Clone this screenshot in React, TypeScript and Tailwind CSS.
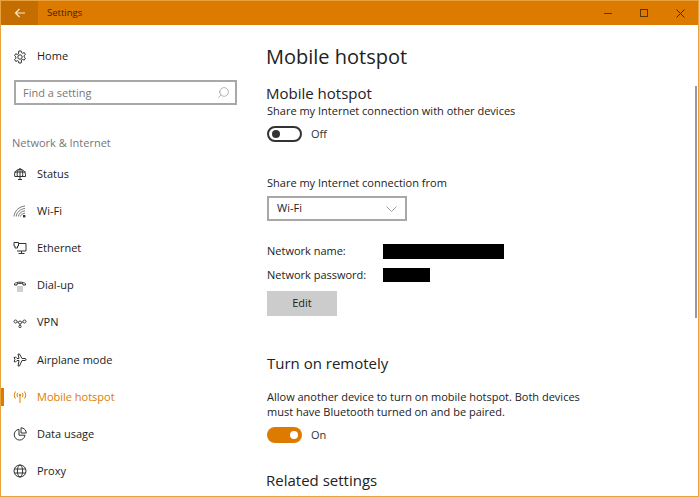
import { Search } from 'lucide-react'
import type { ReactNode } from 'react'

const orange = '#dd7b00'

function GearIcon() {
  return (
    <svg width="14" height="14" viewBox="0 0 14 14" fill="none" stroke="#333" strokeWidth="1">
      <circle cx="7" cy="7" r="2.2" />
      <path d="M5.800 1h2.400l.3 1.700 1.200.6 1.500-.8 1.200 2-1.300 1.100v1.400l1.300 1.200-1.200 2-1.500-.8-1.200.6L8.200 13H5.800l-.3-1.700-1.200-.6-1.500.8-1.200-2 1.300-1.200V6.900L1.600 5.700l1.200-2 1.500.8 1.200-.6z" />
    </svg>
  )
}

function StatusIcon() {
  return (
    <svg width="14" height="14" viewBox="0 0 14 14" fill="none" stroke="#333" strokeWidth="1">
      <path d="M1.800 9.500A5.500 5.500 0 1 1 12.500 7.500v2z" />
      <path d="M1.500 5h11M7 1.500v8M4.500 9.500c-.8-3-.3-6 2-8M9.500 9.500c.6-3 .2-6-2-8M5 12.500h4M7 9.500v3" />
    </svg>
  )
}

function WifiIcon() {
  return (
    <svg width="14" height="14" viewBox="0 0 14 14" fill="none" stroke="#555" strokeWidth="0.8">
      <path d="M1 12.500C1.500 7 6 2.500 12 2M3.200 12.500c.4-4 3.800-7.500 8.800-8M5.400 12.500c.3-2.700 2.800-5.300 6.600-5.700M7.600 12.500c.2-1.500 1.600-3 4.400-3.300" />
      <rect x="10" y="11" width="2.400" height="2.400" fill="#333" stroke="none" />
    </svg>
  )
}

function EthernetIcon() {
  return (
    <svg width="14" height="14" viewBox="0 0 14 14" fill="none" stroke="#333" strokeWidth="1">
      <path d="M5 2.500h8v7.500H4M8.500 10v2.500M5.500 12.500h6" />
      <path d="M1 1.500h4.500v3.500h-1v2h-2.500v-2h-1z" fill="#fff" />
    </svg>
  )
}

function DialIcon() {
  return (
    <svg width="14" height="14" viewBox="0 0 14 14" fill="none" stroke="#333" strokeWidth="1">
      <path d="M1.500 6V4.800C3 2.600 11 2.600 12.500 4.800V6H10V4.800C8.500 4.200 5.500 4.200 4 4.800V6z" />
      <path d="M4.500 8h5M4.500 10h5M4.500 12h5" strokeDasharray="1 1" strokeWidth="0.9" />
    </svg>
  )
}

function VpnIcon() {
  return (
    <svg width="14" height="14" viewBox="0 0 14 14" fill="none" stroke="#333" strokeWidth="0.9">
      <circle cx="2.500" cy="5.500" r="1.500" />
      <circle cx="7" cy="6.500" r="1.500" />
      <circle cx="11.500" cy="5.500" r="1.500" />
      <circle cx="7" cy="10.500" r="1.200" />
      <path d="M4 5.900l1.500.4M10 5.900l-1.500.4M7 8v1.300" />
    </svg>
  )
}

function PlaneIcon() {
  return (
    <svg width="14" height="14" viewBox="0 0 14 14" fill="none" stroke="#333" strokeWidth="1">
      <path d="M1 4.500l1.500-.5L4 5.500h2L5 1h1.500L9 5.500h3c1.300 0 1.500 2 0 2H9L6.500 13H5l1-5.500H4L2.500 9 1 8.500l1-2z" strokeLinejoin="round" />
    </svg>
  )
}

function HotspotIcon() {
  return (
    <svg width="14" height="14" viewBox="0 0 14 14" fill="none" stroke={orange} strokeWidth="1">
      <path d="M7 5.500V13" />
      <circle cx="7" cy="5" r="0.700" fill={orange} />
      <path d="M4.800 2.800c-1 1.300-1 3.100 0 4.400M9.200 2.800c1 1.300 1 3.100 0 4.400M2.600 1.500c-1.700 2.200-1.700 5.300 0 7M11.400 1.500c1.700 2.200 1.700 5.300 0 7" />
    </svg>
  )
}

function DataIcon() {
  return (
    <svg width="14" height="14" viewBox="0 0 14 14" fill="none" stroke="#333" strokeWidth="1">
      <path d="M6 2.300A5.400 5.400 0 1 0 12 8.200H6z" />
      <path d="M8 .8A5.400 5.400 0 0 1 13.300 6H8z" />
    </svg>
  )
}

function GlobeIcon() {
  return (
    <svg width="14" height="14" viewBox="0 0 14 14" fill="none" stroke="#333" strokeWidth="1">
      <circle cx="7" cy="7" r="6" />
      <ellipse cx="7" cy="7" rx="2.600" ry="6" />
      <path d="M1.200 5h11.600M1.200 9h11.600" />
    </svg>
  )
}

const navItems: { label: string; icon: ReactNode; active?: boolean }[] = [
  { label: 'Status', icon: <StatusIcon /> },
  { label: 'Wi-Fi', icon: <WifiIcon /> },
  { label: 'Ethernet', icon: <EthernetIcon /> },
  { label: 'Dial-up', icon: <DialIcon /> },
  { label: 'VPN', icon: <VpnIcon /> },
  { label: 'Airplane mode', icon: <PlaneIcon /> },
  { label: 'Mobile hotspot', icon: <HotspotIcon />, active: true },
  { label: 'Data usage', icon: <DataIcon /> },
  { label: 'Proxy', icon: <GlobeIcon /> },
]

function Toggle({ on, label }: { on: boolean; label: string }) {
  return (
    <div className="flex items-center h-[16px] gap-[9px]">
      <div
        className={
          on
            ? 'w-[35px] h-[16px] rounded-full bg-[#dd7b00] flex items-center justify-end px-[4px]'
            : 'w-[35px] h-[16px] rounded-full border-2 border-[#333] flex items-center px-[3px]'
        }
      >
        <div className={on ? 'w-[8px] h-[8px] rounded-full bg-white' : 'w-[8px] h-[8px] rounded-full bg-[#333]'} />
      </div>
      <span className="text-[11px] text-[#333]">{label}</span>
    </div>
  )
}

export default function App() {
  return (
    <div
      className="relative w-[699px] h-[497px] overflow-hidden flex flex-col bg-white border border-[#e8a33d] text-[#222]"
      style={{ fontFamily: '"Open Sans", "Noto Sans", sans-serif' }}
    >
      {/* Title bar */}
      <div className="h-[24px] shrink-0 flex items-center bg-[#dd7b00]">
        <div className="w-[37px] h-full bg-[#c46d00] flex items-center justify-center">
          <svg width="12" height="10" viewBox="0 0 12 10" fill="none" stroke="#fbe6c8" strokeWidth="1.200">
            <path d="M11 5H1.500M5.500 1L1.500 5l4 4" />
          </svg>
        </div>
        <span className="ml-[9px] text-[9.5px] text-[#3a2500]">Settings</span>
        <div className="ml-auto flex items-center">
          <div className="w-[36px] flex justify-center">
            <div className="w-[8px] h-px bg-[#5a3500]" />
          </div>
          <div className="w-[36px] flex justify-center">
            <div className="w-[8px] h-[8px] border border-[#5a3500]" />
          </div>
          <div className="w-[36px] flex justify-center">
            <svg width="9" height="9" viewBox="0 0 9 9" stroke="#4a2c00" strokeWidth="1">
              <path d="M.5.500l8 8M8.500.500l-8 8" />
            </svg>
          </div>
        </div>
      </div>

      <div className="flex flex-1 min-h-0">
        {/* Sidebar */}
        <div className="w-[265px] shrink-0 flex flex-col">
          <div className="h-[37px] mt-[13px] flex items-center pl-[12px] gap-[10px]">
            <GearIcon />
            <span className="text-[11px]">Home</span>
          </div>
          <div className="ml-[13px] w-[223px] h-[25px] mt-[5px] border-2 border-[#a8a8a8] flex items-center justify-between pl-[7px] pr-[5px]">
            <span className="text-[11px] text-[#777] translate-y-px">Find a setting</span>
            <Search size={13} strokeWidth={1} color="#777" className="-scale-x-100" />
          </div>
          <div className="mt-[28px] h-[20px] pl-[11px] flex items-center text-[11px] text-[#767676]">Network &amp; Internet</div>
          <div className="mt-[2.6px] flex flex-col">
            {navItems.map((item) => (
              <div key={item.label} className="relative h-[37.15px] shrink-0 flex items-center pl-[12px] gap-[10px]">
                {item.active && <div className="absolute left-0 top-[10px] w-[3px] h-[18px] bg-[#dd7b00]" />}
                {item.icon}
                <span className={item.active ? 'text-[11px] text-[#dd7b00]' : 'text-[11px]'}>{item.label}</span>
              </div>
            ))}
          </div>
        </div>

        {/* Content */}
        <div className="flex-1 min-w-0 flex flex-col">
          <div className="mt-[16px] h-[32px] flex items-center text-[20px] text-[#222]">Mobile hotspot</div>
          <div className="mt-[9px] h-[22px] flex items-center text-[15px]">Mobile hotspot</div>
          <div className="-mt-[2px] h-[18px] flex items-center text-[11px] pl-px">Share my Internet connection with other devices</div>
          <div className="mt-[6px] pl-px"><Toggle on={false} label="Off" /></div>
          <div className="mt-[32px] h-[18px] flex items-center text-[11px] pl-px">Share my Internet connection from</div>
          <div className="mt-[4px] ml-px w-[140px] h-[25px] border-2 border-[#a8a8a8] flex items-center justify-between pl-[8px] pr-[8px]">
            <span className="text-[11px]">Wi-Fi</span>
            <svg width="11" height="6" viewBox="0 0 11 6" fill="none" stroke="#888" strokeWidth="0.800">
              <path d="M.5.500l5 5 5-5" />
            </svg>
          </div>
          <div className="mt-[21px] ml-px flex items-center h-[18px]">
            <span className="w-[116px] text-[11px]">Network name:</span>
            <div className="w-[121px] h-[15px] bg-black" />
          </div>
          <div className="mt-[6px] ml-px flex items-center h-[18px]">
            <span className="w-[116px] text-[11px]">Network password:</span>
            <div className="w-[47px] h-[14px] bg-black" />
          </div>
          <div className="mt-[7px] ml-px w-[70px] h-[25px] bg-[#cccccc] flex items-center justify-center text-[11px]">Edit</div>
          <div className="mt-[36px] ml-px h-[22px] flex items-center text-[15px]">Turn on remotely</div>
          <div className="mt-[15px] ml-px w-[330px] text-[11px] leading-[15px]">
            Allow another device to turn on mobile hotspot. Both devices must have Bluetooth turned on and be paired.
          </div>
          <div className="mt-[8px] ml-px"><Toggle on label="On" /></div>
          <div className="mt-[26px] h-[22px] flex items-center text-[15px]">Related settings</div>
        </div>
      </div>

      {/* Scrollbar overlay */}
      <div className="absolute left-[694px] top-[85px] w-[2px] h-[232px] bg-[#999]" />
    </div>
  )
}
